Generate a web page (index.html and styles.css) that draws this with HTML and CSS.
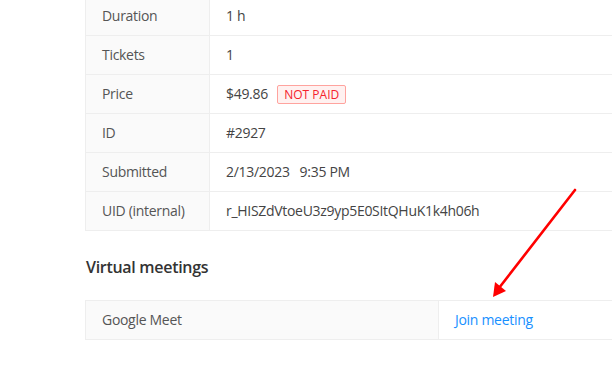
FILE: index.html
```html
<!DOCTYPE html>
<html lang="en">
<head>
  <meta charset="UTF-8">
  <meta name="viewport" content="width=device-width, initial-scale=1.0">
  <title>Booking details</title>
  <link rel="stylesheet" href="styles.css">
</head>
<body>
  <div class="page">
    <table class="details">
      <tr><th>Duration</th><td>1 h</td></tr>
      <tr><th>Tickets</th><td>1</td></tr>
      <tr><th>Price</th><td>$49.86 <span class="tag">NOT PAID</span></td></tr>
      <tr><th>ID</th><td>#2927</td></tr>
      <tr><th>Submitted</th><td>2/13/2023 &nbsp; 9:35 PM</td></tr>
      <tr><th>UID (internal)</th><td>r_HISZdVtoeU3z9yp5E0SItQHuK1k4h06h</td></tr>
    </table>

    <h2 class="section-title">Virtual meetings</h2>
    <table class="details meetings">
      <tr><th>Google Meet</th><td><a href="#" class="link">Join meeting</a></td></tr>
    </table>
  </div>

  <svg class="arrow" width="612" height="374" viewBox="0 0 612 374">
    <line x1="575" y1="190" x2="499" y2="288" stroke="#f00" stroke-width="2.6" stroke-linecap="round"/>
    <polygon points="493,297 495,282 506,291" fill="#f00"/>
  </svg>
</body>
</html>
```

FILE: styles.css
```css
body {
  margin: 0;
  font-family: 'Open Sans', 'Noto Sans', sans-serif;
  font-size: 14px;
  letter-spacing: -0.3px;
  color: #444;
  background: #fff;
  overflow: hidden;
}
.page {
  margin-top: -4px;
  padding-left: 85px;
  width: 700px;
}
.details {
  width: 100%;
  border-collapse: collapse;
  border: 1px solid #eee;
}
.details th,
.details td {
  padding: 8px 16px;
  height: 22px;
  line-height: 22px;
  text-align: left;
  font-weight: normal;
  border-bottom: 1px solid #eee;
  white-space: nowrap;
}
.details th {
  width: 91px;
  background: #fafafa;
  color: #555;
  border-right: 1px solid #eee;
}
.details td {
  color: #444;
}
.meetings th {
  width: 320px;
}
.tag {
  display: inline-block;
  vertical-align: middle;
  margin: -2px 0 0 6px;
  padding: 0 6px;
  font-size: 12px;
  line-height: 17px;
  letter-spacing: 0;
  color: #f5222d;
  background: #fff1f0;
  border: 1px solid #ffa39e;
  border-radius: 2px;
}
.section-title {
  margin: 24px 0 20px 1px;
  font-size: 16px;
  line-height: 25px;
  font-weight: 600;
  color: #333;
}
.link {
  color: #1890ff;
  text-decoration: none;
}
.arrow {
  position: absolute;
  left: 0;
  top: 0;
  pointer-events: none;
}
```
